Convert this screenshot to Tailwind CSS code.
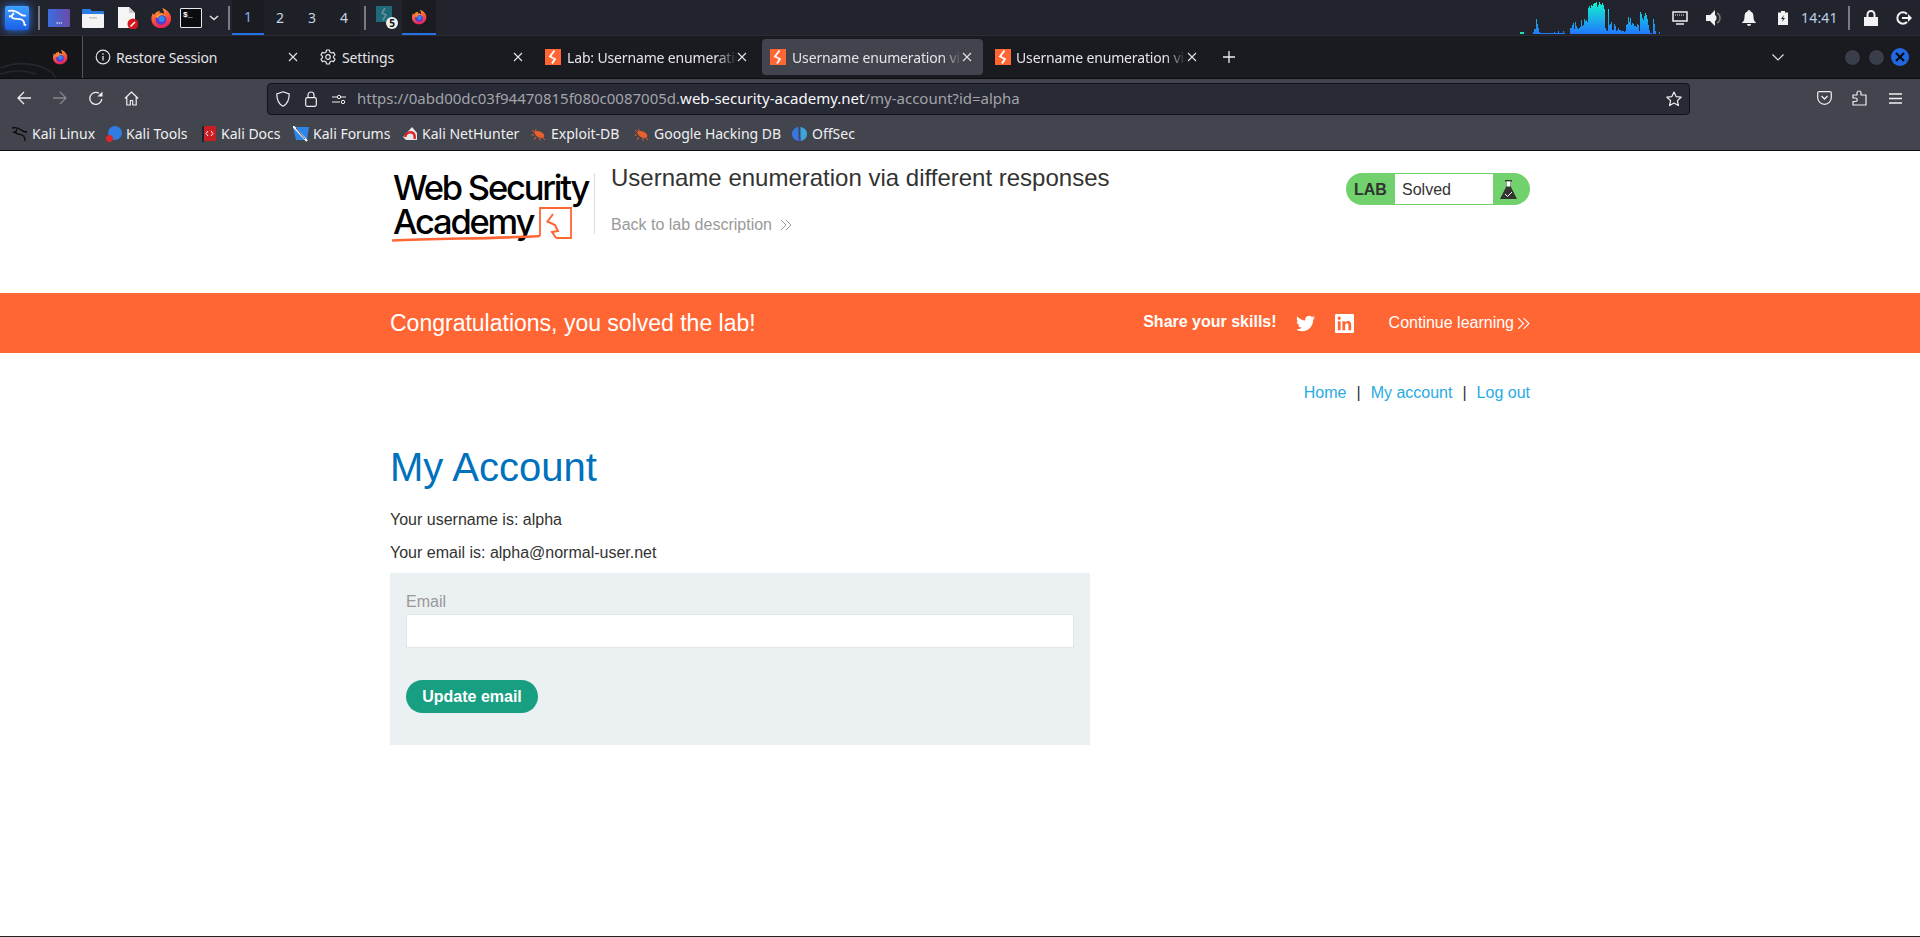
<!DOCTYPE html>
<html lang="en">
<head>
<meta charset="utf-8">
<title>Username enumeration via different responses</title>
<script src="https://cdn.jsdelivr.net/npm/@tailwindcss/browser@4"></script>
</head>
<body class="m-0 bg-white font-['Liberation_Sans',sans-serif]">
<svg class="absolute w-0 h-0" aria-hidden="true">
  <defs>
    <linearGradient id="spec" gradientUnits="userSpaceOnUse" x1="0" y1="34" x2="0" y2="3"><stop offset="0" stop-color="#2277ff"/><stop offset="1" stop-color="#10f0d0"/></linearGradient>
    <linearGradient id="kali" x1="0" y1="0" x2="0" y2="1"><stop offset="0" stop-color="#3fa0ff"/><stop offset="1" stop-color="#1a5fe8"/></linearGradient>
    <linearGradient id="win" x1="0" y1="0" x2="1" y2="0"><stop offset="0" stop-color="#3b6ee0"/><stop offset="1" stop-color="#6a4aa8"/></linearGradient>
    <linearGradient id="fx" x1="0" y1="0" x2="0.3" y2="1"><stop offset="0" stop-color="#ffb02e"/><stop offset="0.55" stop-color="#ff5b3a"/><stop offset="1" stop-color="#e8285a"/></linearGradient>
    <symbol id="firefox" viewBox="0 0 24 24">
      <path fill="url(#fx)" d="M12 23C5.900 23 1.500 18.300 1.500 12.700c0-2.600.8-4.700 1.900-6.200.1 1 .5 1.800 1 2.300C5.600 6 8.300 4.300 11 4.300c-.6 1-.7 1.700-.5 2.200 1.800-.4 3.600.1 4.700 1.300.2-2.100-.5-4.500-2-6.800 4 1.200 7 3.700 8.500 6.600 1 2 1.300 3.800 1.300 5.100C23 18.400 18.100 23 12 23z"/>
      <circle cx="12" cy="13.500" r="5.800" fill="#5a3cd0"/>
      <circle cx="12.800" cy="13" r="3.200" fill="#2f8cf0"/>
      <path fill="#ff9a2e" d="M6 11c1.500-2.500 4-3.800 7-3.500 2.500.3 4.300 1.700 5 3.700-1.500-1.700-3.300-2.400-5.200-2.200C10.500 9.300 9 10.500 8.800 12.500c-.8-.6-1.800-1.200-2.800-1.500z"/>
    </symbol>
    <symbol id="bolt" viewBox="0 0 16 16">
      <rect width="16" height="16" fill="#ff6633"/>
      <path fill="none" stroke="#fff" stroke-width="1.800" d="M9.500 1.500 5 7.500l5 2.500-3 4.500"/>
    </symbol>
    <symbol id="close" viewBox="0 0 10 10">
      <path stroke="#e4e4e8" stroke-width="1.100" d="M1 1l8 8M9 1l-8 8"/>
    </symbol>
    <symbol id="bug" viewBox="0 0 16 16">
      <ellipse cx="8.500" cy="8.500" rx="5.200" ry="2.900" fill="#e8602c" transform="rotate(25 8.500 8.500)"/>
      <path stroke="#e8602c" stroke-width="1" fill="none" d="M4 7 1 4M3 9H.5M5 11l-2 3M9 12l0 2.500M12 12l2 2M4.500 6l.5-3"/>
    </symbol>
  </defs>
</svg>

<div class="flex flex-col h-[937px] w-[1920px] overflow-hidden">
  <!-- desktop panel -->
  <div class="flex items-center h-[35px] shrink-0 bg-[#22242d] font-['Noto_Sans',sans-serif] text-[#c8d4e4] text-[14px] relative">
    <svg class="ml-[4px] w-[26px] h-[26px] drop-shadow-[0_0_4px_#2a7fff]" viewBox="0 0 26 26"><rect x="1" y="1" width="24" height="24" rx="2" fill="url(#kali)"/><path fill="none" stroke="#fff" stroke-width="1.800" d="M4 6c4-1 9 .5 12 3 2 1.600 4 2 6 1.500M10 8c-2 2-3 3.500-1.500 5 3 1.500 6 .5 9 1.500 2 .8 3 3 3 6M8 11l-3 .5M20 19l2 1.500"/></svg>
    <div class="ml-[8px] w-[2px] h-[24px] bg-[#777a82]"></div>
    <svg class="ml-[8px] w-[22px] h-[18px]" viewBox="0 0 22 18"><rect width="22" height="18" rx="1" fill="url(#win)"/><path stroke="#fff" stroke-width="1.200" stroke-dasharray="1.500 .7" d="M8.500 14h5.500"/></svg>
    <svg class="ml-[12px] w-[22px] h-[20px]" viewBox="0 0 22 20"><path fill="#2a7de1" d="M0 2a1 1 0 011-1h7l2 2h11a1 1 0 011 1v6H0z"/><rect y="6" width="22" height="14" rx="1" fill="#f4f4f4"/><rect x="7" y="9" width="8" height="1.500" fill="#c8c8c8"/></svg>
    <div class="ml-[14px] w-[20px] h-[22px] relative">
      <svg class="w-[20px] h-[22px]" viewBox="0 0 20 22"><path fill="#f5f5f5" d="M0 0h11l6 6v15H0z"/><path fill="#c9c9c9" d="M11 0l6 6h-6z"/><circle cx="15" cy="17" r="5.500" fill="#d3161e"/><path stroke="#fff" stroke-width="1.600" d="M12.500 19.500l4.500-4.500"/></svg>
    </div>
    <svg class="ml-[12px] w-[22px] h-[22px]"><use href="#firefox"/></svg>
    <div class="ml-[8px] w-[22px] h-[20px] border border-[#e8e8e8] bg-[#0b0c10] rounded-[1px] flex items-start pl-[2px] font-['Liberation_Mono',monospace] text-[8px] leading-[12px] font-bold text-white">$_</div>
    <svg class="ml-[7px] w-[10px] h-[6px]" viewBox="0 0 10 6"><path fill="none" stroke="#e0e0e0" stroke-width="1.600" d="M1 1l4 3.500L9 1"/></svg>
    <div class="ml-[9px] w-[2px] h-[24px] bg-[#777a82]"></div>
    <div class="ml-[2px] w-[32px] h-[35px] flex items-center justify-center bg-[#1a1c22] border-b-[2px] border-[#2472e8] text-[#7fb0ea]">1</div>
    <div class="w-[32px] h-[35px] flex items-center justify-center bg-[#1e2027]">2</div>
    <div class="w-[32px] h-[35px] flex items-center justify-center bg-[#1e2027]">3</div>
    <div class="w-[32px] h-[35px] flex items-center justify-center bg-[#1e2027]">4</div>
    <div class="ml-[4px] w-[2px] h-[24px] bg-[#777a82]"></div>
    <div class="ml-[10px] w-[22px] h-[24px] relative">
      <svg class="w-[16px] h-[16px]" viewBox="0 0 16 16"><rect width="16" height="16" fill="#1d6b78"/><path fill="none" stroke="#6f8f98" stroke-width="1.500" d="M9 2 6 7l4 2-3 5"/></svg>
      <div class="absolute left-[10px] top-[11px] w-[12px] h-[12px] rounded-full bg-[#f0f0f0] text-[#111] text-[10px] leading-[12px] font-bold text-center">5</div>
    </div>
    <div class="ml-[4px] w-[34px] h-[35px] flex items-center justify-center bg-[#1a1c22] border-b-[2px] border-[#2472e8]"><svg class="w-[16px] h-[16px]"><use href="#firefox"/></svg></div>

    <svg class="ml-[1084px] w-[142px] h-[35px] shrink-0" viewBox="1520 0 142 35">
      <rect x="1520" y="32" width="4" height="2" fill="#22e0b0"/>
      <path fill="url(#spec)" d="M1533 34V32h1V29h1V29h1V19h1V24h1V28h1V32h1V33h14V32h1V33h3V31h1V33h4V31h1V33h1V34zM1570 34V28h1V28h1V25h1V23h1V29h1V22h1V26h1V28h1V29h1V28h1V27h1V20h1V26h1V25h1V19h1V21h1V20h1V22h1V8h1V6h1V8h1V5h1V6h1V4h1V3h1V3h1V2h1V7h1V5h1V2h1V4h1V5h1V3h1V5h1V9h1V28h1V30h1V31h1V9h1V25h1V24h1V22h1V30h1V30h1V24h1V26h1V31h1V30h1V28h1V30h1V30h1V31h1V31h1V31h1V32h1V31h1V25h1V24h1V17h1V22h1V18h1V25h1V23h1V24h1V26h1V26h1V27h1V24h1V25h1V31h1V12h1V14h1V18h1V20h1V16h1V13h1V15h1V19h1V25h1V30h1V33h1V34z"/>
      <path fill="url(#spec)" d="M1651 34V33h1V34zM1653 34V19h1V24h1V31h1V34zM1659 34V32h1V34z"/>
    </svg>
    <svg class="ml-[10px] w-[16px] h-[14px]" viewBox="0 0 16 14"><path fill="none" stroke="#eee" stroke-width="1.500" d="M1 1h14v9H1zM4 13h8"/><path stroke="#eee" stroke-width="1" stroke-dasharray="1 1" d="M3 4h10"/></svg>
    <svg class="ml-[18px] w-[18px] h-[16px]" viewBox="0 0 18 16"><path fill="#f2f2f2" d="M0 5h4l5-5v16l-5-5H0z"/><path fill="none" stroke="#777" stroke-width="1.500" d="M11 3c4 2 4 8 0 10"/><path fill="#f2f2f2" d="M9 5c2 1 2 5 0 6z"/></svg>
    <svg class="ml-[18px] w-[14px] h-[16px]" viewBox="0 0 14 16"><path fill="#f2f2f2" d="M7 0a1.500 1.500 0 011.500 1.500C11 2.300 11.500 4.500 11.500 7c0 3 1 4.500 2.500 5.500V13H0v-.5C1.500 11.500 2.500 10 2.500 7c0-2.500.5-4.700 3-5.500A1.500 1.500 0 017 0zM5 14h4a2 2 0 01-4 0z"/></svg>
    <svg class="ml-[22px] w-[10px] h-[14px]" viewBox="0 0 10 14"><path fill="#f2f2f2" d="M3 0h4v1.500h3V14H0V1.500h3z"/><path fill="#22242d" d="M6 4 3 8h2l-1 3 3-4H5z"/></svg>
    <div class="ml-[13px] w-[35px] text-[14px] tracking-[0.2px] text-[#bcd0e8]">14:41</div>
    <div class="ml-[12px] w-[2px] h-[24px] bg-[#777a82]"></div>
    <svg class="ml-[14px] w-[14px] h-[16px]" viewBox="0 0 14 16"><path fill="#f2f2f2" d="M0 7h14v9H0z"/><path fill="none" stroke="#f2f2f2" stroke-width="2" d="M3.500 7V4.500a3.500 3.500 0 017 0V7"/></svg>
    <svg class="ml-[18px] w-[16px] h-[14px]" viewBox="0 0 16 14"><path fill="none" stroke="#f2f2f2" stroke-width="2" d="M11 3A5.500 5.500 0 103 11a5.500 5.500 0 008 0"/><path fill="#f2f2f2" d="M6 6h6V3l4 4-4 4V8H6z"/></svg>
  </div>

  <!-- tab strip -->
  <div class="flex items-center h-[44px] shrink-0 bg-[#1a1b20] border-t border-[#2c2d33] border-b border-b-[#0d0d10] font-['Noto_Sans',sans-serif] text-[14px] text-[#e4e4e8] tracking-[-0.15px]">
    <div class="relative w-[83px] h-full shrink-0 flex items-center justify-end pr-[14px] border-r border-[#55565c] bg-[#15161a] overflow-hidden">
      <svg class="absolute left-0 top-0 w-[82px] h-[43px]" viewBox="0 0 82 43"><path fill="none" stroke="#26272c" stroke-width="1.500" d="M0 32C16 26 34 26 50 35c3 2 5 5 6 8M0 38c12-4 24-4 36 0"/></svg>
      <svg class="relative w-[16px] h-[16px]"><use href="#firefox"/></svg>
    </div>
    <div class="ml-[4px] w-[225px] shrink-0 pr-[4px]">
      <div class="flex items-center h-[36px] px-[8px]">
        <svg class="w-[16px] h-[16px] shrink-0" viewBox="0 0 16 16"><circle cx="8" cy="8" r="6.800" fill="none" stroke="#e4e4e8" stroke-width="1.200"/><path stroke="#e4e4e8" stroke-width="1.300" d="M8 7v4.500M8 4.200v1.500"/></svg>
        <span class="ml-[5px] flex-1 whitespace-nowrap overflow-hidden">Restore Session</span>
        <svg class="w-[10px] h-[10px] shrink-0 mr-[2px]"><use href="#close"/></svg>
      </div>
    </div>
    <div class="w-[225px] shrink-0 pr-[4px]">
      <div class="flex items-center h-[36px] px-[8px]">
        <svg class="w-[16px] h-[16px] shrink-0" viewBox="0 0 16 16"><circle cx="8" cy="8" r="2.300" fill="none" stroke="#e4e4e8" stroke-width="1.200"/><path fill="none" stroke="#e4e4e8" stroke-width="1.200" stroke-linejoin="round" d="M6.600 1h2.800l.5 2 1.700 1 2-.6 1.400 2.400-1.500 1.500v1.400l1.500 1.500-1.400 2.400-2-.6-1.700 1-.5 2H6.600l-.5-2-1.700-1-2 .6L1 10.200l1.500-1.500V7.300L1 5.800l1.400-2.400 2 .6 1.700-1z"/></svg>
        <span class="ml-[6px] flex-1 whitespace-nowrap overflow-hidden">Settings</span>
        <svg class="w-[10px] h-[10px] shrink-0 mr-[2px]"><use href="#close"/></svg>
      </div>
    </div>
    <div class="w-[225px] shrink-0 pr-[4px]">
      <div class="flex items-center h-[36px] px-[8px]">
        <svg class="w-[16px] h-[16px] shrink-0"><use href="#bolt"/></svg>
        <span class="ml-[6px] w-[170px] whitespace-nowrap overflow-hidden [mask-image:linear-gradient(to_right,#000_88%,transparent)]">Lab: Username enumeration via different responses</span>
        <svg class="w-[10px] h-[10px] shrink-0"><use href="#close"/></svg>
      </div>
    </div>
    <div class="w-[225px] shrink-0 pr-[4px]">
      <div class="flex items-center h-[36px] px-[8px] bg-[#42444d] rounded-[4px]">
        <svg class="w-[16px] h-[16px] shrink-0"><use href="#bolt"/></svg>
        <span class="ml-[6px] w-[170px] whitespace-nowrap overflow-hidden [mask-image:linear-gradient(to_right,#000_88%,transparent)]">Username enumeration via different responses</span>
        <svg class="w-[10px] h-[10px] shrink-0"><use href="#close"/></svg>
      </div>
    </div>
    <div class="w-[225px] shrink-0 pr-[4px]">
      <div class="flex items-center h-[36px] px-[8px]">
        <svg class="w-[16px] h-[16px] shrink-0"><use href="#bolt"/></svg>
        <span class="ml-[5px] w-[170px] whitespace-nowrap overflow-hidden [mask-image:linear-gradient(to_right,#000_88%,transparent)]">Username enumeration via different responses</span>
        <svg class="ml-[1px] w-[10px] h-[10px] shrink-0"><use href="#close"/></svg>
      </div>
    </div>
    <svg class="ml-[11px] w-[12px] h-[12px] shrink-0" viewBox="0 0 12 12"><path stroke="#f0f0f0" stroke-width="1.300" d="M6 0v12M0 6h12"/></svg>
    <svg class="ml-[537px] w-[12px] h-[7px] shrink-0" viewBox="0 0 12 7"><path fill="none" stroke="#e4e4e8" stroke-width="1.200" d="M.5.500 6 6 11.500.500"/></svg>
    <div class="ml-[60px] w-[17px] h-[17px] rounded-full bg-[#3a3d4a] border border-[#121317] shrink-0"></div>
    <div class="ml-[7px] w-[17px] h-[17px] rounded-full bg-[#3a3d4a] border border-[#121317] shrink-0"></div>
    <div class="ml-[6px] w-[18px] h-[18px] rounded-full bg-[#2268e0] shrink-0 flex items-center justify-center">
      <svg class="w-[10px] h-[10px]" viewBox="0 0 10 10"><path stroke="#0b0c10" stroke-width="2.200" d="M1 1l8 8M9 1l-8 8"/></svg>
    </div>
  </div>

  <!-- nav bar -->
  <div class="flex items-center h-[38px] shrink-0 bg-[#42444e] text-[#f0f0f0]">
    <svg class="ml-[17px] w-[14px] h-[14px]" viewBox="0 0 14 14"><path fill="none" stroke="#f0f0f0" stroke-width="1.300" d="M14 7H1M7 1 1 7l6 6"/></svg>
    <svg class="ml-[22px] w-[14px] h-[14px]" viewBox="0 0 14 14"><path fill="none" stroke="#85878e" stroke-width="1.300" d="M0 7h13M7 1l6 6-6 6"/></svg>
    <svg class="ml-[22px] w-[14px] h-[14px]" viewBox="0 0 14 14"><path fill="none" stroke="#f0f0f0" stroke-width="1.300" d="M12.800 8A6 6 0 1110 2.200"/><path fill="#f0f0f0" d="M13.500 .5v5h-5z"/></svg>
    <svg class="ml-[21px] w-[15px] h-[15px]" viewBox="0 0 15 15"><path fill="none" stroke="#f0f0f0" stroke-width="1.200" stroke-linejoin="round" d="M.8 7.500 7.500 1l6.700 6.500M2.800 6v8h3.500V9.500h2.400V14h3.500V6"/></svg>
    <div class="ml-[128px] w-[1423px] h-[32px] mt-[1px] flex items-center bg-[#282a36] border border-[#111216] rounded-[4px] font-['Noto_Sans',sans-serif] text-[15px] whitespace-nowrap">
      <svg class="ml-[8px] w-[14px] h-[16px] shrink-0" viewBox="0 0 14 16"><path fill="none" stroke="#f0f0f0" stroke-width="1.200" d="M7 .8 13.200 3c0 6-1.500 10-6.200 12.200C2.300 13 .8 9 .8 3z"/></svg>
      <svg class="ml-[15px] w-[12px] h-[16px] shrink-0" viewBox="0 0 12 16"><rect x=".7" y="6.700" width="10.600" height="8.600" rx="1.500" fill="none" stroke="#f0f0f0" stroke-width="1.200"/><path fill="none" stroke="#f0f0f0" stroke-width="1.200" d="M3 6.700V4a3 3 0 016 0v2.700"/></svg>
      <svg class="ml-[15px] w-[14px] h-[10px] shrink-0" viewBox="0 0 14 10"><path stroke="#f0f0f0" stroke-width="1.100" d="M0 8h8M0 3h5M9 3h5"/><circle cx="7" cy="3" r="1.700" fill="none" stroke="#f0f0f0"/><circle cx="11" cy="8" r="1.700" fill="none" stroke="#f0f0f0"/></svg>
      <div class="ml-[11px] text-[#a3a4a9]">https://0abd00dc03f94470815f080c0087005d.<span class="text-[#f8f8fa]">web-security-academy.net</span>/my-account?id=alpha</div>
      <svg class="ml-auto mr-[7px] w-[16px] h-[16px] shrink-0" viewBox="0 0 16 16"><path fill="none" stroke="#f0f0f0" stroke-width="1.200" stroke-linejoin="round" d="M8 1l2.100 4.600 5 .6-3.700 3.400 1 5L8 12.100 3.600 14.600l1-5L.9 6.200l5-.6z"/></svg>
    </div>
    <svg class="ml-[127px] w-[15px] h-[14px]" viewBox="0 0 15 14"><path fill="none" stroke="#f0f0f0" stroke-width="1.200" d="M2 .7h11a1.300 1.300 0 011.300 1.300v4.500a6.800 6.800 0 01-13.600 0V2A1.300 1.300 0 012 .7z"/><path fill="none" stroke="#f0f0f0" stroke-width="1.300" d="M4.500 5 7.500 8l3-3"/></svg>
    <svg class="ml-[20px] w-[15px] h-[16px]" viewBox="0 0 15 16"><path fill="none" stroke="#f0f0f0" stroke-width="1.200" stroke-linejoin="round" d="M1 5h4V3a2 2 0 014 0v2h5v10H1v-3.500h2.500a1.700 1.700 0 000-3.500H1z"/></svg>
    <svg class="ml-[22px] w-[13px] h-[11px]" viewBox="0 0 13 11"><path stroke="#f0f0f0" stroke-width="1.300" d="M0 1h13M0 5.500h13M0 10h13"/></svg>
  </div>

  <!-- bookmarks -->
  <div class="flex items-center h-[34px] shrink-0 bg-[#42444e] border-b border-b-[#0c0c0f] font-['Noto_Sans',sans-serif] text-[14px] text-[#f0f0f0] whitespace-nowrap">
    <svg class="ml-[12px] w-[16px] h-[16px] shrink-0" viewBox="0 0 16 16"><path fill="none" stroke="#0a0a0a" stroke-width="1.300" d="M0 2c4-1 7 0 9 2 1.500 1.500 3 2 6 2M5 3 3.500 6.500C5 8.500 8 8 10 9s3 3 3 6M3.500 6.500 1 6"/></svg>
    <span class="ml-[4px] w-[58px] shrink-0">Kali Linux</span>
    <div class="ml-[16px] w-[16px] h-[16px] relative shrink-0">
      <div class="absolute right-0 top-0 w-[14px] h-[14px] rounded-full bg-[#2f7de0]"></div>
      <div class="absolute left-0 bottom-0 w-[7px] h-[7px] rounded-full bg-[#e0252b]"></div>
    </div>
    <span class="ml-[4px] w-[60px] shrink-0">Kali Tools</span>
    <svg class="ml-[16px] w-[14px] h-[16px] shrink-0" viewBox="0 0 14 16"><path fill="#1c2433" d="M0 0h2v16H0z"/><rect x="2" width="12" height="15" fill="#c81e24"/><path stroke="#fff" stroke-width="1" fill="none" d="M6 5 4 7.500 6 10M9 5l2 2.500L9 10"/></svg>
    <span class="ml-[5px] w-[59px] shrink-0">Kali Docs</span>
    <svg class="ml-[13px] w-[16px] h-[16px] shrink-0" viewBox="0 0 16 16"><path fill="#2d85e8" d="M0 1h16l-2 13H3z"/><path stroke="#fff" stroke-width="2" d="M0 0l14 15"/><path stroke="#222" stroke-width=".8" d="M3 2l9 11"/></svg>
    <span class="ml-[4px] w-[76px] shrink-0">Kali Forums</span>
    <svg class="ml-[13px] w-[16px] h-[16px] shrink-0" viewBox="0 0 16 16"><path fill="#e8e8e8" d="M1 11 10 1l5 6v7H8L4 14z"/><path fill="none" stroke="#d8242a" stroke-width="2.500" d="M3 11c1-4 5-6 8-4 1.500 1 2 3 1.500 6"/></svg>
    <span class="ml-[4px] w-[96px] shrink-0">Kali NetHunter</span>
    <svg class="ml-[13px] w-[16px] h-[16px] shrink-0"><use href="#bug"/></svg>
    <span class="ml-[4px] w-[72px] shrink-0">Exploit-DB</span>
    <svg class="ml-[11px] w-[16px] h-[16px] shrink-0"><use href="#bug"/></svg>
    <span class="ml-[4px] w-[125px] shrink-0">Google Hacking DB</span>
    <svg class="ml-[13px] w-[15px] h-[16px] shrink-0" viewBox="0 0 15 16"><path fill="#3478e0" d="M6.500 1v14C3 14.500 0 12 0 8s3-6.500 6.500-7z"/><path fill="#3ca4dc" d="M8.500 1v14c3.500-.5 6.500-3 6.500-7s-3-6.500-6.500-7z"/><path fill="#5a3cc8" d="M6 12h3l-1.500 4z"/></svg>
    <span class="ml-[5px] shrink-0">OffSec</span>
  </div>

  <!-- page -->
  <div class="flex-1 bg-white border-b border-b-[#222] flex flex-col min-h-0">
    <header class="w-[1140px] ml-[390px] h-[142px] shrink-0 flex items-start">
      <div class="relative w-[204px] h-[142px] shrink-0 font-['Inter',sans-serif] font-medium text-black">
        <div class="absolute left-[3px] top-[18px] text-[34.500px] leading-[38px] tracking-[-2.200px] whitespace-nowrap">Web Security</div>
        <div class="absolute left-[3px] top-[52px] text-[34.500px] leading-[38px] tracking-[-2.200px] whitespace-nowrap">Academy</div>
        <svg class="absolute left-0 top-[50px] w-[190px] h-[50px]" viewBox="0 0 190 50" fill="none" stroke="#ff6633"><path stroke-width="2.600" d="M2 39.500C50 37 100 38 150 35"/><path stroke-width="1.800" d="M150 35V7H181V37H166"/><path stroke-width="2" d="M163 13 157.500 20.500 165 24 168 30 162 31 166 37"/></svg>
      </div>
      <div class="mt-[22px] w-px h-[61px] bg-[#dedede] shrink-0"></div>
      <div class="ml-[16px] flex-1 h-full flex flex-col pt-[13px]">
        <div class="text-[24px] leading-[28px] text-[#333332] whitespace-nowrap">Username enumeration via different responses</div>
        <div class="mt-[24px] flex items-center text-[16px] leading-[18px] text-[#999]">Back to lab description
          <svg class="ml-[8px] w-[12px] h-[12px]" viewBox="0 0 12 12"><path fill="none" stroke="#999" d="M1 1l5 5-5 5M6 1l5 5-5 5"/></svg>
        </div>
      </div>
      <div class="mt-[22px] w-[184px] h-[32px] rounded-[16px] bg-[#70d16d] flex items-center shrink-0 mr-0 p-[1px]">
        <div class="w-[48px] pl-[7px] pt-[2px] text-[16px] font-bold text-[#333332]">LAB</div>
        <div class="w-[98px] h-[30px] bg-white pl-[7px] text-[16px] leading-[31px] text-[#333332]">Solved</div>
        <svg class="ml-[7px] w-[17px] h-[21px]" viewBox="0 0 17 21"><path fill="#333332" d="M6 3h5v5l6 12H0L6 8z"/><rect x="5" y="1" width="7" height="1.500" fill="#333332"/><rect x="6.500" y="2.500" width="4" height="5" fill="#fff"/><path fill="none" stroke="#fff" stroke-width="1" d="M5 15l2.500 2.500L12 13"/></svg>
      </div>
    </header>

    <div class="h-[60px] shrink-0 bg-[#ff6633] text-white">
      <div class="w-[1140px] ml-[390px] h-full flex items-center">
        <div class="text-[23px] leading-[30px]">Congratulations, you solved the lab!</div>
        <div class="ml-auto text-[16px] font-bold -mt-[2px]">Share your skills!</div>
        <svg class="ml-[19px] w-[19px] h-[19px]" viewBox="0 0 24 24"><path fill="#fff" d="M23.950 4.570a10 10 0 01-2.820.770 4.960 4.960 0 002.160-2.720c-.950.550-2 .960-3.120 1.190a4.920 4.920 0 00-8.380 4.480C7.690 8.090 4.070 6.130 1.640 3.160a4.820 4.820 0 00-.660 2.470c0 1.710.870 3.210 2.190 4.100a4.900 4.900 0 01-2.230-.620v.060a4.920 4.920 0 003.950 4.830 4.990 4.990 0 01-2.220.080 4.940 4.940 0 004.600 3.420A9.870 9.870 0 010 19.540a13.990 13.990 0 007.560 2.210c9.050 0 14-7.500 14-13.980 0-.210 0-.420-.020-.630a9.940 9.940 0 002.460-2.550z"/></svg>
        <svg class="ml-[20px] w-[19px] h-[19px]" viewBox="0 0 24 24"><path fill="#fff" d="M20.450 20.450h-3.560v-5.570c0-1.330-.020-3.040-1.850-3.040-1.850 0-2.140 1.450-2.140 2.940v5.670H9.350V9h3.410v1.560h.050c.480-.900 1.640-1.850 3.370-1.850 3.600 0 4.270 2.370 4.270 5.460v6.280zM5.340 7.430a2.060 2.060 0 110-4.130 2.060 2.060 0 010 4.130zM7.120 20.450H3.560V9h3.560v11.450zM22.220 0H1.770C.790 0 0 .770 0 1.730v20.540C0 23.230.790 24 1.770 24h20.450c.980 0 1.780-.770 1.780-1.730V1.730C24 .770 23.200 0 22.220 0z"/></svg>
        <div class="ml-[35px] text-[16px]">Continue learning</div>
        <svg class="ml-[3px] w-[13px] h-[13px]" viewBox="0 0 12 12"><path fill="none" stroke="#fff" d="M1 1l5 5-5 5M6 1l5 5-5 5"/></svg>
      </div>
    </div>

    <main class="w-[1140px] ml-[390px] flex flex-col text-[16px] text-[#333332]">
      <nav class="mt-[31px] h-[18px] leading-[18px] flex justify-end whitespace-nowrap">
        <span class="text-[#29abe2]">Home</span><span class="mx-[10px]">|</span><span class="text-[#29abe2]">My account</span><span class="mx-[10px]">|</span><span class="text-[#29abe2]">Log out</span>
      </nav>
      <h1 class="mt-[42px] text-[40px] leading-[46px] text-[#0071bc]">My Account</h1>
      <p class="mt-[21px] leading-[18px]">Your username is: alpha</p>
      <p class="mt-[15px] leading-[18px]">Your email is: alpha@normal-user.net</p>
      <form class="mt-[11px] w-[700px] h-[172px] bg-[#ebf0f2] pl-[16px] pr-[16px] pt-[20px]">
        <label class="block h-[16px] leading-[18px] text-[#999]">Email</label>
        <div class="mt-[5px] h-[34px] bg-white border border-[#e2e6e8]"></div>
        <div class="mt-[32px] w-[132px] h-[33px] rounded-[17px] bg-[#189e80] text-white font-bold text-[16px] leading-[33px] text-center">Update email</div>
      </form>
    </main>
  </div>
</div>
</body>
</html>
